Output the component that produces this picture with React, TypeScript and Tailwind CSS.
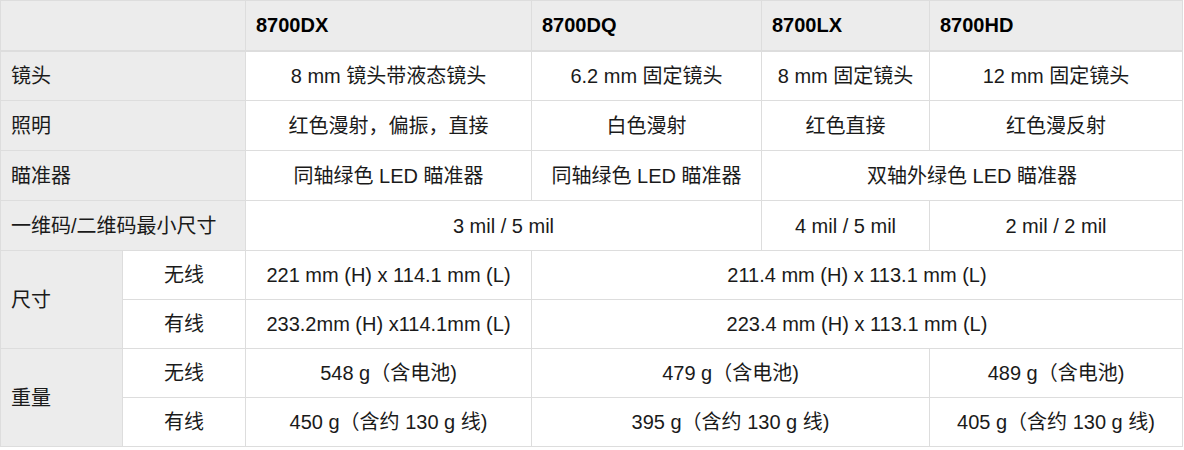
type Cell = {
  text: string
  colSpan?: number
}

type SpecRow = {
  label: string
  cells: Cell[]
}

const models = ['8700DX', '8700DQ', '8700LX', '8700HD']

const simpleRows: SpecRow[] = [
  {
    label: '镜头',
    cells: [
      { text: '8 mm 镜头带液态镜头' },
      { text: '6.2 mm 固定镜头' },
      { text: '8 mm 固定镜头' },
      { text: '12 mm 固定镜头' },
    ],
  },
  {
    label: '照明',
    cells: [
      { text: '红色漫射，偏振，直接' },
      { text: '白色漫射' },
      { text: '红色直接' },
      { text: '红色漫反射' },
    ],
  },
  {
    label: '瞄准器',
    cells: [
      { text: '同轴绿色 LED 瞄准器' },
      { text: '同轴绿色 LED 瞄准器' },
      { text: '双轴外绿色 LED 瞄准器', colSpan: 2 },
    ],
  },
  {
    label: '一维码/二维码最小尺寸',
    cells: [
      { text: '3 mil / 5 mil', colSpan: 2 },
      { text: '4 mil / 5 mil' },
      { text: '2 mil / 2 mil' },
    ],
  },
]

const groupRows = [
  {
    label: '尺寸',
    rows: [
      { sub: '无线', cells: [{ text: '221 mm (H) x 114.1 mm (L)' }, { text: '211.4 mm (H) x 113.1 mm (L)', colSpan: 3 }] },
      { sub: '有线', cells: [{ text: '233.2mm (H) x114.1mm (L)' }, { text: '223.4 mm (H) x 113.1 mm (L)', colSpan: 3 }] },
    ],
  },
  {
    label: '重量',
    rows: [
      {
        sub: '无线',
        cells: [{ text: '548 g（含电池)' }, { text: '479 g（含电池)', colSpan: 2 }, { text: '489 g（含电池)' }],
      },
      {
        sub: '有线',
        cells: [
          { text: '450 g（含约 130 g 线)' },
          { text: '395 g（含约 130 g 线)', colSpan: 2 },
          { text: '405 g（含约 130 g 线)' },
        ],
      },
    ],
  },
]

const border = 'border border-[#dddddd]'
const labelCell = `${border} bg-[#ececec] px-[10px] text-left`
const valueCell = `${border} bg-white px-[10px] text-center`

function App() {
  return (
    <div
      className="bg-white text-[20px] leading-[24px] text-[#1a1a1a]"
      style={{ fontFamily: '"Liberation Sans", Arial, "Noto Sans CJK SC", sans-serif' }}
    >
      <table className="w-[1182px] table-fixed border-collapse">
        <colgroup>
          <col className="w-[122px]" />
          <col className="w-[123px]" />
          <col className="w-[286px]" />
          <col className="w-[230px]" />
          <col className="w-[168px]" />
          <col className="w-[253px]" />
        </colgroup>
        <thead>
          <tr className="h-[50px]">
            <th className={`${labelCell} border-b-2 font-normal`} colSpan={2}></th>
            {models.map((model) => (
              <th className={`${labelCell} border-b-2 font-bold text-black`} key={model}>
                {model}
              </th>
            ))}
          </tr>
        </thead>
        <tbody>
          {simpleRows.map((row) => (
            <tr className="h-[50px]" key={row.label}>
              <td className={labelCell} colSpan={2}>
                {row.label}
              </td>
              {row.cells.map((cell, i) => (
                <td className={valueCell} colSpan={cell.colSpan} key={i}>
                  {cell.text}
                </td>
              ))}
            </tr>
          ))}
          {groupRows.map((group) =>
            group.rows.map((row, ri) => (
              <tr className="h-[49px]" key={group.label + row.sub}>
                {ri === 0 ? (
                  <td className={labelCell} rowSpan={group.rows.length}>
                    {group.label}
                  </td>
                ) : null}
                <td className={valueCell}>{row.sub}</td>
                {row.cells.map((cell, i) => (
                  <td className={valueCell} colSpan={cell.colSpan} key={i}>
                    {cell.text}
                  </td>
                ))}
              </tr>
            )),
          )}
        </tbody>
      </table>
    </div>
  )
}

export default App
